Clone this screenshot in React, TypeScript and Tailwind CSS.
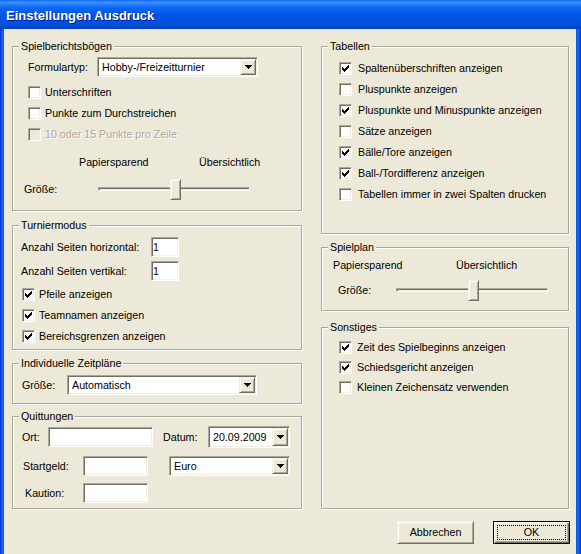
import React from "react";

// classic Windows bevels
const sunken =
  "border border-t-[#ACA899] border-l-[#ACA899] border-r-white border-b-white shadow-[inset_1px_1px_0_#716F64,inset_-1px_-1px_0_#F1EFE2]";
const raised =
  "border border-t-[#F1EFE2] border-l-[#F1EFE2] border-r-[#716F64] border-b-[#716F64] shadow-[inset_1px_1px_0_#fff,inset_-1px_-1px_0_#ACA899]";

function GroupBox({ title, className, children }: { title: string; className: string; children?: React.ReactNode }) {
  return (
    <div className={`relative border border-[#ACA899] shadow-[inset_1px_1px_0_#fff,1px_1px_0_#fff] ${className}`}>
      <span className="absolute -top-[7px] left-[6px] px-[2px] bg-[#ECE9D8] leading-[13px] whitespace-nowrap">{title}</span>
      {children}
    </div>
  );
}

function Check({ checked, disabled }: { checked?: boolean; disabled?: boolean }) {
  return (
    <span className={`block w-[13px] h-[13px] shrink-0 ${sunken} ${disabled ? "bg-[#ECE9D8]" : "bg-white"}`}>
      {checked && (
        <svg width="11" height="11" viewBox="0 0 11 11" className="block" shapeRendering="crispEdges">
          <path
            fill="#000"
            d="M2 4h1v3h-1z M3 5h1v3h-1z M4 6h1v3h-1z M5 5h1v3h-1z M6 4h1v3h-1z M7 3h1v3h-1z M8 2h1v3h-1z"
          />
        </svg>
      )}
    </span>
  );
}

function CheckRow({ label, checked, disabled, gap }: { label: string; checked?: boolean; disabled?: boolean; gap: string }) {
  return (
    <div className={`flex items-center h-[13px] ${gap}`}>
      <Check checked={checked} disabled={disabled} />
      <span
        className={`leading-[13px] whitespace-nowrap ${
          disabled ? "text-[#ACA899] [text-shadow:1px_1px_0_#fff]" : ""
        }`}
      >
        {label}
      </span>
    </div>
  );
}

function Arrow() {
  return (
    <svg width="7" height="4" viewBox="0 0 7 4" className="block" shapeRendering="crispEdges">
      <path fill="#000" d="M0 0H7V1H6V2H5V3H4V4H3V3H2V2H1V1H0Z" />
    </svg>
  );
}

function Combo({ value, className }: { value: string; className: string }) {
  return (
    <div className={`flex p-[1px] bg-white ${sunken} ${className}`}>
      <span className="flex-1 flex items-center pl-[3px] whitespace-nowrap overflow-hidden">{value}</span>
      <span className={`w-[16px] flex items-center justify-center bg-[#ECE9D8] ${raised}`}>
        <Arrow />
      </span>
    </div>
  );
}

function Edit({ value, className }: { value?: string; className: string }) {
  return <div className={`flex items-center pl-[1px] bg-white ${sunken} ${className}`}>{value}</div>;
}

function Slider() {
  return (
    <div className="relative w-[152px] h-[21px]">
      <div className={`absolute left-0 right-0 top-[8px] h-[4px] ${sunken}`} />
      <div className={`absolute top-0 left-[72px] w-[11px] h-[21px] bg-[#ECE9D8] ${raised}`} />
    </div>
  );
}

export default function App() {
  return (
    <div className="w-[581px] h-[554px] overflow-hidden flex flex-col bg-[#ECE9D8] font-['Liberation_Sans',Arial,sans-serif] text-[10.7px] leading-[13px] text-black">
      {/* Title bar */}
      <div className="h-[29px] shrink-0 flex items-center pl-[6px] pt-[2px] bg-[linear-gradient(to_bottom,#0A5FF0_0px,#3D95FF_2px,#2884FA_4px,#0A66F0_8px,#0058E6_14px,#0054E2_20px,#0051DD_24px,#0046CC_27px,#003CB8_29px)]">
        <span className="text-white font-bold text-[13px] [text-shadow:1px_1px_0_#0A1883]">Einstellungen Ausdruck</span>
      </div>

      <div className="flex flex-1">
        <div className="w-[4px] shrink-0 bg-[linear-gradient(to_right,#0831D9,#166AEE_60%,#0855DD)]" />

        {/* Dialog body */}
        <div className="flex-1 flex flex-col">
          <div className="flex mt-[17px]">
            {/* Left column */}
            <div className="ml-[8px] w-[290px] flex flex-col">
              <GroupBox title="Spielberichtsbögen" className="h-[165px] pt-[10px]">
                <div className="flex items-center h-[20px] pl-[15px]">
                  <span className="w-[69px]">Formulartyp:</span>
                  <Combo value="Hobby-/Freizeitturnier" className="w-[161px] h-[20px]" />
                </div>
                <div className="flex flex-col gap-[8px] pl-[15px] mt-[9px]">
                  <CheckRow label="Unterschriften" gap="gap-[4px]" />
                  <CheckRow label="Punkte zum Durchstreichen" gap="gap-[4px]" />
                  <CheckRow label="10 oder 15 Punkte pro Zeile" disabled gap="gap-[4px]" />
                </div>
                <div className="flex mt-[15px] pl-[66px]">
                  <span className="w-[120px]">Papiersparend</span>
                  <span>Übersichtlich</span>
                </div>
                <div className="flex items-center mt-[10px] pl-[11px]">
                  <span className="w-[74px]">Größe:</span>
                  <Slider />
                </div>
              </GroupBox>

              <GroupBox title="Turniermodus" className="mt-[14px] h-[125px] pt-[11px]">
                <div className="flex items-center h-[20px] pl-[8px]">
                  <span className="w-[130px]">Anzahl Seiten horizontal:</span>
                  <Edit value="1" className="w-[28px] h-[20px]" />
                </div>
                <div className="flex items-center h-[20px] pl-[8px] mt-[4px]">
                  <span className="w-[130px]">Anzahl Seiten vertikal:</span>
                  <Edit value="1" className="w-[28px] h-[20px]" />
                </div>
                <div className="flex flex-col gap-[8px] pl-[9px] mt-[7px]">
                  <CheckRow label="Pfeile anzeigen" checked gap="gap-[4px]" />
                  <CheckRow label="Teamnamen anzeigen" checked gap="gap-[4px]" />
                  <CheckRow label="Bereichsgrenzen anzeigen" checked gap="gap-[4px]" />
                </div>
              </GroupBox>

              <GroupBox title="Individuelle Zeitpläne" className="mt-[13px] h-[41px] pt-[11px]">
                <div className="flex items-center h-[20px] pl-[9px]">
                  <span className="w-[45px]">Größe:</span>
                  <Combo value="Automatisch" className="w-[190px] h-[20px]" />
                </div>
              </GroupBox>

              <GroupBox title="Quittungen" className="mt-[12px] h-[93px] pt-[9px]">
                <div className="flex items-center h-[22px] pl-[9px]">
                  <span className="w-[26px]">Ort:</span>
                  <Edit className="w-[105px] h-[20px]" />
                  <span className="ml-[10px] w-[45px]">Datum:</span>
                  <Combo value="20.09.2009" className="w-[82px] h-[22px]" />
                </div>
                <div className="flex items-center h-[20px] pl-[10px] mt-[8px]">
                  <span className="w-[60px]">Startgeld:</span>
                  <Edit className="w-[65px] h-[20px]" />
                  <Combo value="Euro" className="ml-[21px] w-[121px] h-[20px]" />
                </div>
                <div className="flex items-center h-[20px] pl-[12px] mt-[7px]">
                  <span className="w-[58px]">Kaution:</span>
                  <Edit className="w-[65px] h-[20px]" />
                </div>
              </GroupBox>
            </div>

            {/* Right column */}
            <div className="ml-[19px] w-[248px] flex flex-col">
              <GroupBox title="Tabellen" className="h-[188px] pt-[15px]">
                <div className="flex flex-col gap-[8px] pl-[17px]">
                  <CheckRow label="Spaltenüberschriften anzeigen" checked gap="gap-[6px]" />
                  <CheckRow label="Pluspunkte anzeigen" gap="gap-[6px]" />
                  <CheckRow label="Pluspunkte und Minuspunkte anzeigen" checked gap="gap-[6px]" />
                  <CheckRow label="Sätze anzeigen" gap="gap-[6px]" />
                  <CheckRow label="Bälle/Tore anzeigen" checked gap="gap-[6px]" />
                  <CheckRow label="Ball-/Tordifferenz anzeigen" checked gap="gap-[6px]" />
                  <CheckRow label="Tabellen immer in zwei Spalten drucken" gap="gap-[6px]" />
                </div>
              </GroupBox>

              <GroupBox title="Spielplan" className="mt-[13px] h-[64px] pt-[11px]">
                <div className="flex pl-[11px]">
                  <span className="w-[123px]">Papiersparend</span>
                  <span>Übersichtlich</span>
                </div>
                <div className="flex items-center mt-[8px] pl-[16px]">
                  <span className="w-[58px]">Größe:</span>
                  <Slider />
                </div>
              </GroupBox>

              <GroupBox title="Sonstiges" className="mt-[16px] h-[182px] pt-[13px]">
                <div className="flex flex-col gap-[7px] pl-[17px]">
                  <CheckRow label="Zeit des Spielbeginns anzeigen" checked gap="gap-[5px]" />
                  <CheckRow label="Schiedsgericht anzeigen" checked gap="gap-[5px]" />
                  <CheckRow label="Kleinen Zeichensatz verwenden" gap="gap-[5px]" />
                </div>
              </GroupBox>
            </div>
          </div>

          {/* Buttons */}
          <div className="flex justify-end gap-[19px] mt-[12px] pr-[6px]">
            <button className={`w-[77px] h-[23px] bg-[#ECE9D8] ${raised} flex items-center justify-center`}>
              Abbrechen
            </button>
            <button className="relative w-[77px] h-[23px] bg-[#ECE9D8] border border-black shadow-[inset_1px_1px_0_#fff,inset_-1px_-1px_0_#716F64,inset_-2px_-2px_0_#ACA899] flex items-center justify-center">
              <span className="absolute inset-[3px] border border-dotted border-black" />
              OK
            </button>
          </div>
        </div>

        <div className="w-[5px] shrink-0 bg-[linear-gradient(to_right,#0855DD,#166AEE_40%,#0831D9)]" />
      </div>
    </div>
  );
}
